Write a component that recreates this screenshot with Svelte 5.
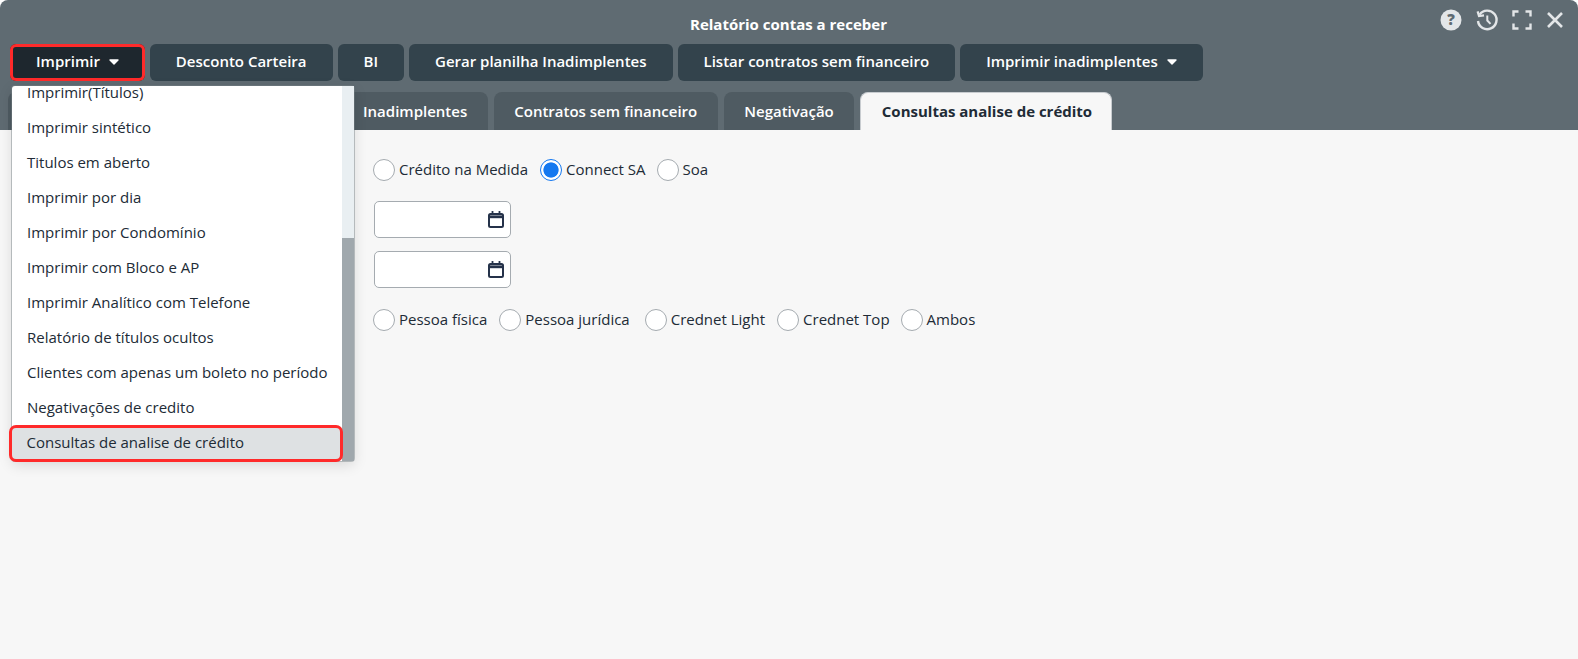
<script>
  const items = ['Imprimir(Títulos)','Imprimir sintético','Titulos em aberto','Imprimir por dia','Imprimir por Condomínio','Imprimir com Bloco e AP','Imprimir Analítico com Telefone','Relatório de títulos ocultos','Clientes com apenas um boleto no período','Negativações de credito'];
  const tabs = ['Inadimplentes','Contratos sem financeiro','Negativação'];
  const group1 = ['Crédito na Medida','Connect SA','Soa'];
  const group2 = ['Pessoa física','Pessoa jurídica','Crednet Light','Crednet Top','Ambos'];
</script>

{#snippet caret()}
  <svg class="caret" width="10" height="6" viewBox="0 0 10 6"><path d="M1 1h8L5 5z" fill="#fff" stroke="#fff" stroke-width="1.4" stroke-linejoin="round"/></svg>
{/snippet}
{#snippet calendar()}
  <svg width="16" height="17" viewBox="0 0 16 17" fill="none" stroke="#25324a" stroke-width="2"><rect x="1" y="3" width="14" height="13" rx="1.5"/><path d="M1 5.8h14" stroke-width="2.8"/><path d="M4.5 0v3M11.5 0v3" stroke-width="1.8"/></svg>
{/snippet}

<div class="page">
  <header class="head">
    <div class="title">Relatório contas a receber</div>
    <div class="icons">
      <svg width="22" height="22" viewBox="0 0 22 22"><circle cx="11" cy="11" r="10.5" fill="#e3e6e8"/><text x="11" y="16" text-anchor="middle" class="q">?</text></svg>
      <svg class="hist" width="24" height="24" viewBox="0 0 24 24" fill="none" stroke="#e3e6e8" stroke-width="2.4"><path d="M4.6 6.6A9.3 9.3 0 1 1 3 13"/><path d="M2.6 3.4 4 8l5-.6" stroke-width="2.2"/><path d="M12.3 7.5v5l3.2 3.4" stroke-width="2"/></svg>
      <svg class="full" width="20" height="20" viewBox="0 0 20 20" fill="none" stroke="#e3e6e8" stroke-width="2.4"><path d="M1.5 6.5v-5h5M13.5 1.5h5v5M18.5 13.5v5h-5M6.5 18.5h-5v-5"/></svg>
      <svg class="close" width="18" height="18" viewBox="0 0 18 18" fill="none" stroke="#e3e6e8" stroke-width="2.6"><path d="M2 2l14 14M16 2 2 16"/></svg>
    </div>
    <div class="toolbar">
      <button class="btn active">Imprimir {@render caret()}</button>
      <button class="btn">Desconto Carteira</button>
      <button class="btn">BI</button>
      <button class="btn">Gerar planilha Inadimplentes</button>
      <button class="btn">Listar contratos sem financeiro</button>
      <button class="btn">Imprimir inadimplentes {@render caret()}</button>
    </div>
    <div class="tabs">
      <div class="tab hidden-tab"></div>
      {#each tabs as t}<div class="tab">{t}</div>{/each}
      <div class="tab current">Consultas analise de crédito</div>
    </div>
  </header>

  <main class="content">
    <div class="radios first">
      {#each group1 as g, i}
        <label class="radio"><span class="dot" class:on={i === 1}></span><span class="lbl">{g}</span></label>
      {/each}
    </div>
    <div class="date">{@render calendar()}</div>
    <div class="date second">{@render calendar()}</div>
    <div class="radios last">
      {#each group2 as g}
        <label class="radio"><span class="dot"></span><span class="lbl">{g}</span></label>
      {/each}
    </div>
  </main>

  <div class="menu">
    <div class="list">
      {#each items as it}<div class="item">{it}</div>{/each}
      <div class="item selected">Consultas de analise de crédito</div>
    </div>
    <div class="track"><div class="thumb"></div></div>
  </div>
</div>

<style>
  :global(body) { margin: 0; background: #fff; }
  .page { position: relative; width: 1578px; height: 659px; overflow: hidden; font-family: "Open Sans", sans-serif; font-size: 15px; color: #212b36; display: flex; flex-direction: column; }
  .head { position: relative; height: 130px; flex: none; box-sizing: border-box; background: #5f6b72; border-radius: 8px 8px 0 0; padding: 0 8px; }
  .title { color: #fff; font-weight: 700; font-size: 15px; line-height: 20px; text-align: center; padding-top: 14px; padding-right: 1px; }
  .icons { position: absolute; top: 8px; right: 14px; display: flex; align-items: center; gap: 0; }
  .icons svg { display: block; }
  .q { font: 800 15px "Open Sans", sans-serif; fill: #5f6b72; }
  .hist { margin-left: 13px; }
  .full { margin-left: 13px; }
  .close { margin-left: 14px; }
  .toolbar { display: flex; gap: 5px; margin-top: 10px; padding-left: 2px; }
  .btn { height: 37px; padding: 0 26px 4px; border: 0; border-radius: 6px; background: #33434c; color: #fff; font: 600 15px "Open Sans", sans-serif; white-space: nowrap; display: flex; align-items: center; }
  .btn.active { background: #1e272e; box-shadow: inset 0 0 0 3px #ff2a2a; border-radius: 6px; }
  .caret { margin-left: 9px; flex: none; position: relative; top: 1px; }
  .tabs { display: flex; gap: 6px; margin-top: 11px; }
  .tab { height: 38px; line-height: 38px; padding: 0 20.5px; box-sizing: border-box; background: #4f5b62; color: #fff; font-weight: 600; border-radius: 8px 8px 0 0; white-space: nowrap; }
  .hidden-tab { width: 328.5px; padding: 0; }
  .tab.current { background: #f7f7f7; color: #212b36; font-weight: 700; padding: 0 18.5px 0 20.5px; border: 1px solid #c8ccd0; border-bottom: 0; line-height: 36px; }
  .content { flex: 1; background: #f7f7f7; padding: 29px 0 0 373px; }
  .radios { display: flex; height: 22px; align-items: center; }
  .radio { display: flex; align-items: center; color: #212b36; }
  .lbl { padding-bottom: 2px; }
  .first .radio { margin-right: 12px; }
  .first .radio:nth-child(2) { margin-right: 11px; }
  .last .radio { margin-right: 12px; }
  .last .radio:nth-child(2) { margin-right: 15px; }
  .last .radio:nth-child(3) { margin-right: 12px; }
  .last .radio:nth-child(4) { margin-right: 11px; }
  .dot { width: 22px; height: 22px; box-sizing: border-box; border: 1px solid #a5abb0; border-radius: 50%; background: #fff; margin-right: 4px; flex: none; }
  .dot.on { border-color: #1478f0; background: radial-gradient(circle, #1478f0 0 7.2px, #fff 8px); }
  .date { width: 137px; height: 37px; box-sizing: border-box; margin: 20px 0 0 1px; background: #fff; border: 1px solid #a5abb0; border-radius: 5px; display: flex; align-items: center; justify-content: flex-end; padding-right: 6px; }
  .date.second { margin-top: 13px; }
  .last { margin-top: 21px; }
  .menu { position: absolute; left: 12px; top: 86px; width: 342px; height: 375px; background: #fff; display: flex; border-radius: 3px; box-shadow: 0 0 0 1px rgba(120,130,135,.45), 0 4px 14px rgba(0,0,0,.13); }
  .list { width: 330px; flex: none; margin-top: -11px; clip-path: inset(11px -6px -6px -6px); }
  .item { height: 35px; line-height: 34px; padding-left: 15px; box-sizing: border-box; white-space: nowrap; }
  .track { width: 12px; background: #e9eff2; display: flex; flex-direction: column; justify-content: flex-end; }
  .thumb { height: 223px; background: #a0a8ad; }
  .item.selected { position: relative; background: #dee1e3; height: 37px; margin: 0 -1px 0 -3px; padding-left: 14.5px; border: 3px solid #ff2a2a; border-radius: 7px; line-height: 28px; }
</style>
